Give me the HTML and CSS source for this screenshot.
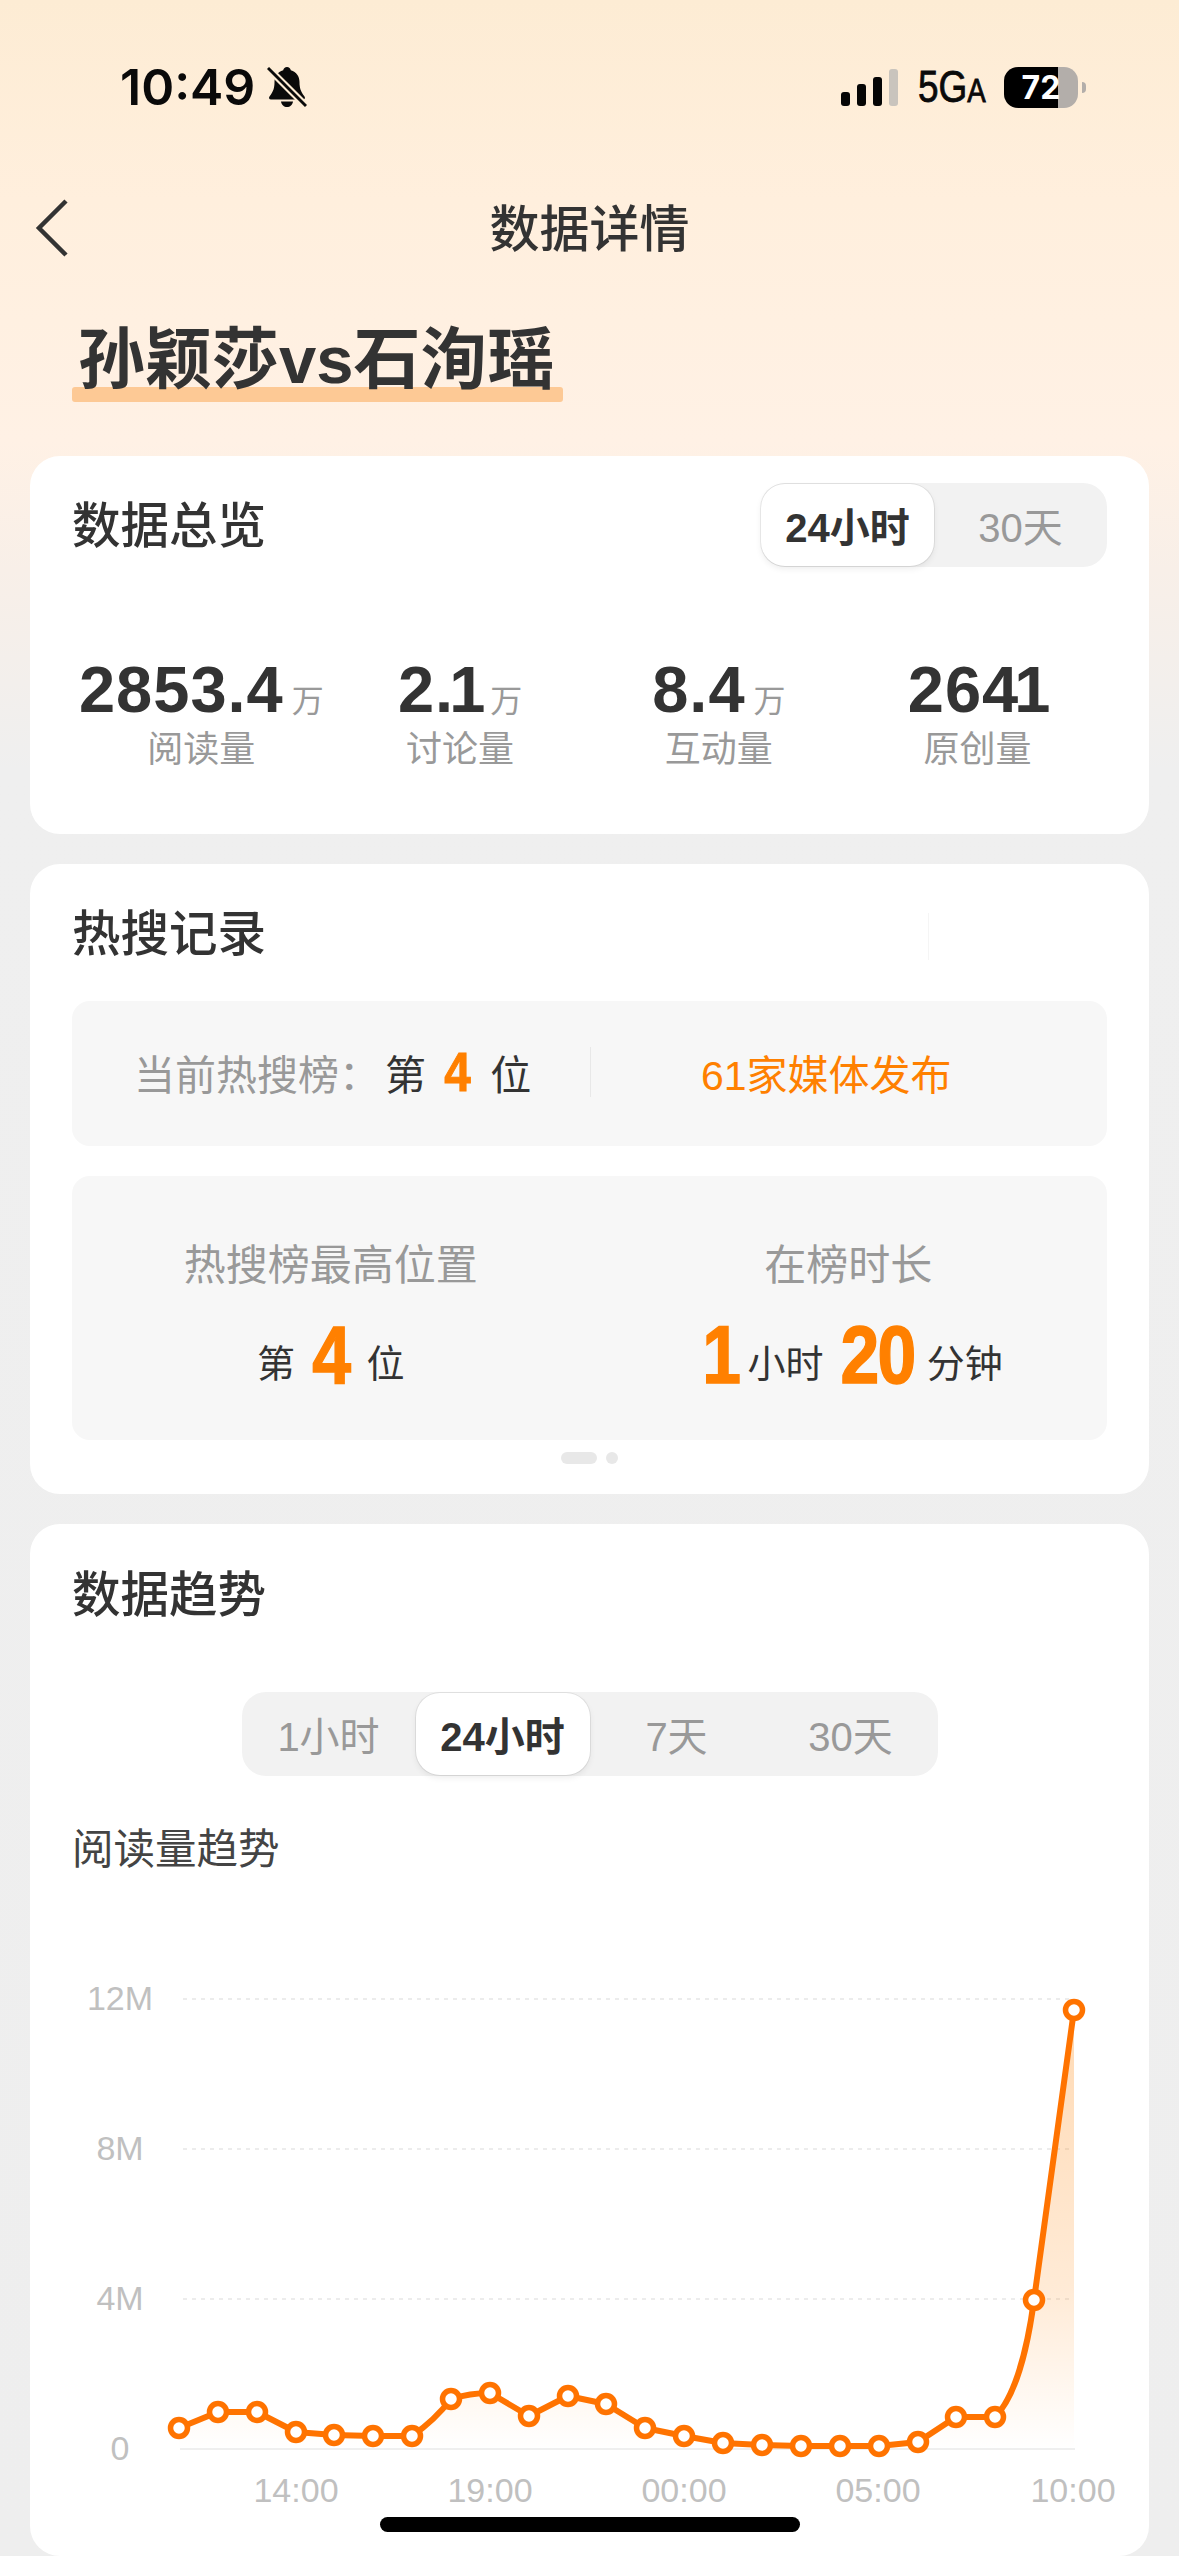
FILE: index.html
```html
<!DOCTYPE html>
<html lang="zh-CN">
<head>
    <meta charset="UTF-8">
    <meta name="viewport" content="width=device-width, initial-scale=1.0">
    <title>数据详情</title>
    <link rel="stylesheet" href="styles.css">
</head>
<body>
    <div class="page">
        <!-- Status bar -->
        <div class="status-bar">
            <div class="status-left">
                <span class="clock">10:49</span>
                <svg class="bell" viewBox="0 0 40 42" width="40" height="42">
                    <path d="M20 1c2 0 3.500 1.300 3.800 3.200C29.500 5.800 32.500 10.500 32.500 16c0 6 1.200 9.500 5 14.500 1 1.300.3 3-1.500 3H4c-1.800 0-2.500-1.700-1.500-3 3.800-5 5-8.500 5-14.500 0-5.500 3-10.200 8.700-11.800C16.500 2.300 18 1 20 1z" fill="#0a0a0a"/>
                    <path d="M14 35.500h12c-.5 3.500-3 5.500-6 5.500s-5.500-2-6-5.500z" fill="#0a0a0a"/>
                    <line x1="1" y1="2" x2="39" y2="40" stroke="#fdecd4" stroke-width="7"/>
                    <line x1="1" y1="2" x2="39" y2="40" stroke="#0a0a0a" stroke-width="3"/>
                </svg>
            </div>
            <div class="status-right">
                <div class="signal">
                    <span class="bar bar-1"></span>
                    <span class="bar bar-2"></span>
                    <span class="bar bar-3"></span>
                    <span class="bar bar-4"></span>
                </div>
                <span class="network">5G<small>A</small></span>
                <div class="battery"><span>72</span></div>
                <span class="battery-tip"></span>
            </div>
        </div>

        <!-- Nav -->
        <div class="nav">
            <svg class="back" viewBox="0 0 34 58" width="34" height="58">
                <path d="M31 2L4 29l27 27" fill="none" stroke="#333" stroke-width="4.500"/>
            </svg>
            <span class="nav-title">数据详情</span>
        </div>

        <h1 class="topic"><span>孙颖莎vs石洵瑶</span></h1>

        <!-- Overview -->
        <section class="card overview">
            <div class="card-head">
                <h2>数据总览</h2>
                <div class="seg">
                    <span class="seg-item active">24小时</span>
                    <span class="seg-item">30天</span>
                </div>
            </div>
            <div class="stats">
                <div class="stat">
                    <div class="stat-num">2853.4<small>万</small></div>
                    <div class="stat-label">阅读量</div>
                </div>
                <div class="stat">
                    <div class="stat-num">2.<span class="one">1</span><small>万</small></div>
                    <div class="stat-label">讨论量</div>
                </div>
                <div class="stat">
                    <div class="stat-num">8.4<small>万</small></div>
                    <div class="stat-label">互动量</div>
                </div>
                <div class="stat">
                    <div class="stat-num">264<span class="one">1</span></div>
                    <div class="stat-label">原创量</div>
                </div>
            </div>
        </section>

        <!-- Hot search -->
        <section class="card hot">
            <h2>热搜记录</h2>
            <span class="hot-line"></span>
            <div class="rank-now">
                <div class="rank-pos">
                    <span class="muted">当前热搜榜：</span><span>第</span><b class="rank-digit">4</b><span>位</span>
                </div>
                <span class="rank-sep"></span>
                <span class="rank-media">61家媒体发布</span>
            </div>
            <div class="rank-best">
                <div class="rank-col">
                    <div class="rank-label">热搜榜最高位置</div>
                    <div class="rank-value">第<b class="single">4</b>位</div>
                </div>
                <div class="rank-col">
                    <div class="rank-label">在榜时长</div>
                    <div class="rank-value"><b>1</b>小时<b class="minutes">20</b>分钟</div>
                </div>
            </div>
            <div class="pager">
                <span class="pager-on"></span>
                <span class="pager-dot"></span>
            </div>
        </section>

        <!-- Trend -->
        <section class="card trend">
            <h2>数据趋势</h2>
            <div class="seg seg-wide">
                <span class="seg-item">1小时</span>
                <span class="seg-item active">24小时</span>
                <span class="seg-item">7天</span>
                <span class="seg-item">30天</span>
            </div>
            <h3>阅读量趋势</h3>
            <svg class="chart" viewBox="72 1960 1035 596" width="1035" height="596">
                <defs>
                    <linearGradient id="areaFill" gradientUnits="userSpaceOnUse" x1="0" y1="2000" x2="0" y2="2449">
                        <stop offset="0" stop-color="#ff8000" stop-opacity="0.3"/>
                        <stop offset="0.65" stop-color="#ff8000" stop-opacity="0.16"/>
                        <stop offset="1" stop-color="#ff8000" stop-opacity="0"/>
                    </linearGradient>
                </defs>
                <g class="grid">
                    <line x1="183" y1="1999" x2="1074" y2="1999"/>
                    <line x1="183" y1="2149" x2="1074" y2="2149"/>
                    <line x1="183" y1="2299" x2="1074" y2="2299"/>
                </g>
                <line class="zero" x1="180" y1="2449" x2="1075" y2="2449"/>
                <g class="axis-y">
                    <text x="120" y="2010">12M</text>
                    <text x="120" y="2160">8M</text>
                    <text x="120" y="2310">4M</text>
                    <text x="120" y="2460">0</text>
                </g>
                <g class="axis-x">
                    <text x="296" y="2502">14:00</text>
                    <text x="490" y="2502">19:00</text>
                    <text x="684" y="2502">00:00</text>
                    <text x="878" y="2502">05:00</text>
                    <text x="1073" y="2502">10:00</text>
                </g>
                <path class="area" d="M179 2428L218 2412L257 2412L296 2432L334 2435L373 2436L412 2436Q435 2420 451 2399Q470 2393 490 2393L529 2416L568 2396L606 2404L645 2428L684 2436L723 2443L762 2445L801 2446L840 2446L879 2446L918 2442L956 2417L995 2417C1012 2400 1026 2360 1034 2300L1074 2010L1074 2449L179 2449Z"/>
                <path class="line" d="M179 2428L218 2412L257 2412L296 2432L334 2435L373 2436L412 2436Q435 2420 451 2399Q470 2393 490 2393L529 2416L568 2396L606 2404L645 2428L684 2436L723 2443L762 2445L801 2446L840 2446L879 2446L918 2442L956 2417L995 2417C1012 2400 1026 2360 1034 2300L1074 2010"/>
                <g class="dots">
                    <circle cx="179" cy="2428" r="8.500"/><circle cx="218" cy="2412" r="8.500"/>
                    <circle cx="257" cy="2412" r="8.500"/><circle cx="296" cy="2432" r="8.500"/>
                    <circle cx="334" cy="2435" r="8.500"/><circle cx="373" cy="2436" r="8.500"/>
                    <circle cx="412" cy="2436" r="8.500"/><circle cx="451" cy="2399" r="8.500"/>
                    <circle cx="490" cy="2393" r="8.500"/><circle cx="529" cy="2416" r="8.500"/>
                    <circle cx="568" cy="2396" r="8.500"/><circle cx="606" cy="2404" r="8.500"/>
                    <circle cx="645" cy="2428" r="8.500"/><circle cx="684" cy="2436" r="8.500"/>
                    <circle cx="723" cy="2443" r="8.500"/><circle cx="762" cy="2445" r="8.500"/>
                    <circle cx="801" cy="2446" r="8.500"/><circle cx="840" cy="2446" r="8.500"/>
                    <circle cx="879" cy="2446" r="8.500"/><circle cx="918" cy="2442" r="8.500"/>
                    <circle cx="956" cy="2417" r="8.500"/><circle cx="995" cy="2417" r="8.500"/>
                    <circle cx="1034" cy="2300" r="8.500"/><circle cx="1074" cy="2010" r="8.500"/>
                </g>
            </svg>
        </section>

        <div class="home-indicator"></div>
    </div>
</body>
</html>
```

FILE: styles.css
```css
* {
    box-sizing: border-box;
}

html, body {
    margin: 0;
    padding: 0;
}

body {
    font-family: "Liberation Sans", "Noto Sans CJK SC", sans-serif;
    color: #333;
    background-color: #eee;
}

.page {
    position: relative;
    width: 1179px;
    height: 2556px;
    overflow: hidden;
    padding: 0 30px;
    background: linear-gradient(180deg, #fdecd4 0, #ffefdd 200px, #fff1e5 440px, #f8efe8 570px, #efefef 770px, #eee 100%);
}

/* Status bar */
.status-bar {
    height: 174px;
    display: flex;
    align-items: center;
    justify-content: space-between;
    padding: 0 63px 0 90px;
}

.status-left {
    display: flex;
    align-items: center;
    gap: 12px;
}

.clock {
    font-family: Inter, sans-serif;
    font-size: 50px;
    font-weight: 600;
    color: #0a0a0a;
}

.status-right {
    display: flex;
    align-items: center;
}

.signal {
    display: flex;
    align-items: flex-end;
    gap: 7px;
    height: 37px;
}

.bar {
    width: 9px;
    background-color: #050505;
    border-radius: 3px;
}

.bar-1 { height: 14px; }
.bar-2 { height: 22px; }
.bar-3 { height: 29px; }
.bar-4 { height: 37px; background-color: #c9c4bd; }

.network {
    width: 67px;
    margin: 0 19px 0 20px;
    font-size: 44px;
    color: #0a0a0a;
    -webkit-text-stroke: 0.800px #0a0a0a;
    transform: scaleX(0.84);
    transform-origin: left center;
    white-space: nowrap;
}

.network small {
    font-size: 33px;
}

.battery {
    width: 74px;
    height: 41px;
    border-radius: 14px;
    display: flex;
    align-items: center;
    justify-content: center;
    background: linear-gradient(90deg, #000 73%, #b3aeaa 73%);
    color: #fff;
    font-family: Inter, sans-serif;
    font-size: 32px;
    font-weight: 700;
}

.battery-tip {
    width: 4px;
    height: 11px;
    margin-left: 4px;
    background-color: #b3aeaa;
    border-radius: 0 4px 4px 0;
}

/* Nav */
.nav {
    position: relative;
    height: 108px;
    padding-bottom: 6px;
    display: flex;
    align-items: center;
    justify-content: center;
}

.back {
    position: absolute;
    left: 5px;
    top: 25px;
}

.nav-title {
    font-size: 50px;
    font-weight: 500;
}

.topic {
    margin: 0;
    height: 174px;
    padding: 39px 0 0 48px;
    font-size: 67px;
    line-height: 78px;
    font-weight: 700;
}

.topic span {
    position: relative;
    display: inline-block;
    z-index: 0;
}

.topic span::after {
    content: "";
    position: absolute;
    z-index: -1;
    left: -6px;
    right: -8px;
    bottom: -3px;
    height: 15px;
    background-color: #fdc995;
    border-radius: 3px;
}

/* Cards */
.card {
    background-color: #fff;
    border-radius: 30px;
    padding: 0 42px;
    margin-bottom: 30px;
}

h2 {
    margin: 0;
    font-size: 48.500px;
    line-height: 60px;
    font-weight: 500;
    color: #333;
}

.overview {
    height: 378px;
    padding-top: 27px;
}

.card-head {
    display: flex;
    align-items: center;
    justify-content: space-between;
}

.card-head h2 {
    padding-top: 2px;
}

.seg {
    display: flex;
    height: 84px;
    background-color: #f2f2f2;
    border-radius: 24px;
}

.seg-item {
    width: 173px;
    display: flex;
    align-items: center;
    justify-content: center;
    font-size: 40px;
    color: #999;
}

.seg-item.active {
    margin: 1px 0;
    background-color: #fff;
    border-radius: 24px;
    box-shadow: 0 0 0 1px rgba(0, 0, 0, 0.07), 0 3px 6px rgba(0, 0, 0, 0.07);
    color: #333;
    font-weight: 700;
}

/* Overview numbers */
.stats {
    display: grid;
    grid-template-columns: repeat(4, 1fr);
    margin-top: 87px;
}

.stat {
    text-align: center;
}

.stat-num {
    font-size: 65px;
    line-height: 72px;
    font-weight: 700;
    letter-spacing: 1px;
}

.stat-num .one {
    margin-left: -5px;
    letter-spacing: -3px;
}

.stat-num small {
    margin-left: 8px;
    font-size: 32px;
    line-height: 0;
    font-weight: 400;
    letter-spacing: 0;
    color: #999;
}

.stat-label {
    margin-top: 2px;
    font-size: 36px;
    line-height: 44px;
    color: #999;
}

/* Hot search */
.hot {
    position: relative;
    height: 630px;
    padding-top: 40px;
}

.hot-line {
    position: absolute;
    left: 898px;
    top: 49px;
    width: 1px;
    height: 47px;
    background-color: #f5f5f5;
}

.rank-now {
    height: 145px;
    margin-top: 37px;
    display: flex;
    align-items: center;
    padding: 0 0 4px 62px;
    background-color: #f7f7f7;
    border-radius: 18px;
    font-size: 41px;
}

.rank-pos {
    width: 456px;
    display: flex;
    align-items: center;
}

.muted {
    color: #999;
    margin-right: 5px;
}

.rank-digit {
    margin: 0 17px 0 16px;
    font-size: 56px;
    line-height: 56px;
    color: #ff8000;
    -webkit-text-stroke: 1px #ff8000;
    transform: scaleX(0.85);
}

.rank-sep {
    width: 1px;
    height: 50px;
    background-color: #e8e8e8;
}

.rank-media {
    margin-left: 110px;
    color: #ff8000;
}

.rank-best {
    height: 264px;
    margin-top: 30px;
    display: grid;
    grid-template-columns: 1fr 1fr;
    padding-top: 60px;
    background-color: #f7f7f7;
    border-radius: 18px;
}

.rank-col {
    text-align: center;
}

.rank-label {
    font-size: 42px;
    line-height: 60px;
    color: #999;
}

.rank-value {
    margin-top: 26px;
    font-size: 38px;
    line-height: 84px;
    color: #333;
}

.rank-value b {
    display: inline-block;
    margin: 0 5px;
    font-size: 82px;
    line-height: 0;
    vertical-align: -6px;
    letter-spacing: -2px;
    color: #ff8000;
    -webkit-text-stroke: 1.500px #ff8000;
    transform: scaleX(0.85);
}

.rank-value b.single {
    margin: 0 14px;
}

.rank-value b.minutes {
    margin-left: 11px;
}

.pager {
    display: flex;
    justify-content: center;
    gap: 9px;
    margin-top: 12px;
}

.pager-on {
    width: 36px;
    height: 12px;
    background-color: #e8e8e8;
    border-radius: 6px;
}

.pager-dot {
    width: 12px;
    height: 12px;
    background-color: #e8e8e8;
    border-radius: 6px;
}

/* Trend */
.trend {
    padding-top: 41px;
    margin-bottom: 0;
}

.seg-wide {
    width: 696px;
    margin: 67px auto 0;
}

.seg-wide .seg-item {
    width: 174px;
}

h3 {
    margin: 44px 0 0;
    font-size: 41.500px;
    line-height: 60px;
    font-weight: 400;
    color: #444;
}

.chart {
    display: block;
    margin-top: 80px;
    overflow: visible;
}

.grid line {
    stroke: #e6e6e6;
    stroke-width: 1.500;
    stroke-dasharray: 4 5;
}

.zero {
    stroke: #efefef;
    stroke-width: 2;
}

.axis-y text,
.axis-x text {
    font-size: 34px;
    fill: #c0c0c0;
    text-anchor: middle;
}

.area {
    fill: url(#areaFill);
}

.line {
    fill: none;
    stroke: #ff7300;
    stroke-width: 6;
    stroke-linejoin: round;
}

.dots circle {
    fill: #fff;
    stroke: #ff7300;
    stroke-width: 5.500;
}

.home-indicator {
    position: absolute;
    left: 380px;
    top: 2517px;
    width: 420px;
    height: 15px;
    background-color: #000;
    border-radius: 8px;
}
```
